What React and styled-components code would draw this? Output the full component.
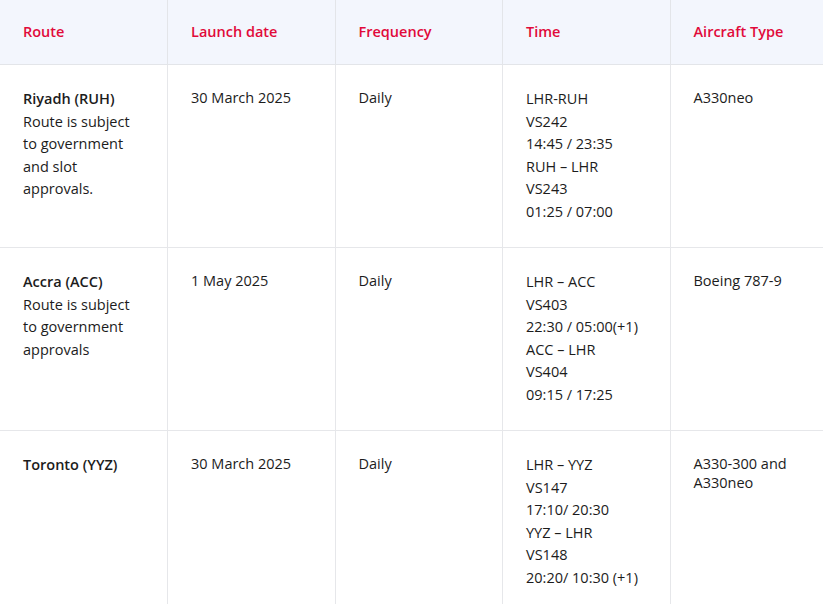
import styled, { createGlobalStyle } from 'styled-components';

const GlobalStyle = createGlobalStyle`
  html, body {
    margin: 0;
    padding: 0;
    background: #ffffff;
    overflow: hidden;
  }
  body {
    font-family: "Open Sans", "Liberation Sans", sans-serif;
    color: #1c1c1c;
  }
`;

const Table = styled.table`
  width: 838px;
  table-layout: fixed;
  border-collapse: collapse;
  font-size: 14.5px;
`;

const HeadCell = styled.th`
  width: 167.5px;
  box-sizing: border-box;
  padding: 22px 23px 23px;
  text-align: left;
  vertical-align: middle;
  background: #f3f6fd;
  color: #e10a3a;
  font-weight: 600;
  line-height: 19px;
  border-right: 1px solid #e3e5e9;
  border-bottom: 1px solid #e3e5e9;
`;

const Cell = styled.td`
  box-sizing: border-box;
  padding: 23px 23px 24px;
  vertical-align: top;
  font-weight: 500;
  line-height: ${(props) => (props.$tall ? '22.5px' : '19px')};
  border-right: 1px solid #e6e7ea;
  border-bottom: 1px solid #e6e7ea;
`;

const RouteName = styled.strong`
  display: block;
  font-weight: 600;
`;

const Line = styled.span`
  display: block;
  white-space: nowrap;
`;

const routes = [
  {
    name: 'Riyadh (RUH)',
    note: 'Route is subject to government and slot approvals.',
    date: '30 March 2025',
    frequency: 'Daily',
    time: ['LHR-RUH', 'VS242', '14:45 / 23:35', 'RUH – LHR', 'VS243', '01:25 / 07:00'],
    aircraft: 'A330neo',
  },
  {
    name: 'Accra (ACC)',
    note: 'Route is subject to government approvals',
    date: '1 May 2025',
    frequency: 'Daily',
    time: ['LHR – ACC', 'VS403', '22:30 / 05:00(+1)', 'ACC – LHR', 'VS404', '09:15 / 17:25'],
    aircraft: 'Boeing 787-9',
  },
  {
    name: 'Toronto (YYZ)',
    note: '',
    date: '30 March 2025',
    frequency: 'Daily',
    time: ['LHR – YYZ', 'VS147', '17:10/ 20:30', 'YYZ – LHR', 'VS148', '20:20/ 10:30 (+1)'],
    aircraft: 'A330-300 and A330neo',
  },
];

const headings = ['Route', 'Launch date', 'Frequency', 'Time', 'Aircraft Type'];

export default function App() {
  return (
    <>
      <GlobalStyle />
      <Table>
        <thead>
          <tr>
            {headings.map((heading) => (
              <HeadCell key={heading}>{heading}</HeadCell>
            ))}
          </tr>
        </thead>
        <tbody>
          {routes.map((route) => (
            <tr key={route.name}>
              <Cell $tall>
                <RouteName>{route.name}</RouteName>
                {route.note}
              </Cell>
              <Cell>{route.date}</Cell>
              <Cell>{route.frequency}</Cell>
              <Cell $tall>
                {route.time.map((line) => (
                  <Line key={line}>{line}</Line>
                ))}
              </Cell>
              <Cell>{route.aircraft}</Cell>
            </tr>
          ))}
        </tbody>
      </Table>
    </>
  );
}
